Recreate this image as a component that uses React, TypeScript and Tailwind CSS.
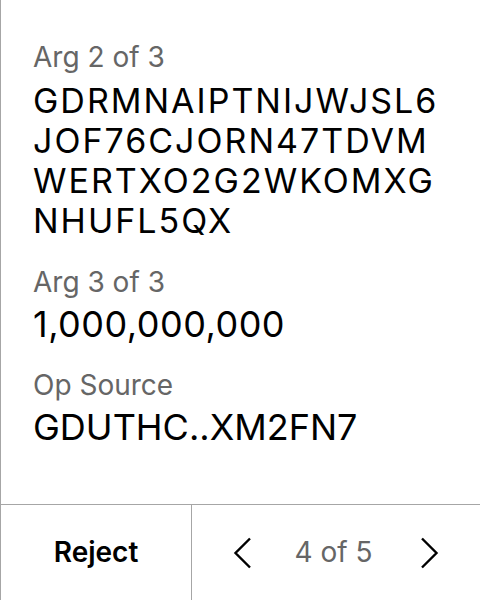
const addressLines = ['GDRMNAIPTNIJWJSL6', 'JOF76CJORN47TDVM', 'WERTXO2G2WKOMXG', 'NHUFL5QX']

function Chevron({ dir }: { dir: 'left' | 'right' }) {
  return (
    <svg width="20" height="32" viewBox="0 0 20 32" fill="none" className="shrink-0 text-black">
      <path
        d={dir === 'left' ? 'M17 1.5 L2.5 16 L17 30.5' : 'M3 1.5 L17.5 16 L3 30.5'}
        stroke="currentColor"
        strokeWidth="2.4"
      />
    </svg>
  )
}

export default function App() {
  return (
    <div
      className="w-[480px] h-[600px] bg-white border-l border-[#a6a6a6] flex flex-col"
      style={{ fontFamily: 'Inter, "Noto Sans", sans-serif' }}
    >
      <div className="flex-1 pl-8 pr-6 pt-[41px]">
        <div className="text-[28px] leading-[32px] text-[#666666]">Arg 2 of 3</div>
        <div className="mt-[8px] text-[34px] leading-[40px] tracking-[2px] text-black">
          {addressLines.map((line) => (
            <div key={line}>{line}</div>
          ))}
        </div>

        <div className="mt-[25px] text-[28px] leading-[32px] text-[#666666]">Arg 3 of 3</div>
        <div className="mt-[4px] text-[36px] leading-[44px] tracking-[0.5px] text-black">1,000,000,000</div>

        <div className="mt-[23px] text-[28px] leading-[32px] text-[#666666]">Op Source</div>
        <div className="mt-[4px] text-[36px] leading-[44px] text-black">GDUTHC..XM2FN7</div>
      </div>

      <div className="h-[96px] border-t border-[#a6a6a6] flex">
        <button className="w-[191px] border-r border-[#a6a6a6] flex items-center justify-center pb-[2px] text-[28px] font-semibold text-black">
          Reject
        </button>
        <div className="flex-1 flex items-center pl-[41px]">
          <Chevron dir="left" />
          <span className="w-[161px] mr-[5px] text-center text-[28px] text-[#666666] pb-[2px]">4 of 5</span>
          <Chevron dir="right" />
        </div>
      </div>
    </div>
  )
}
